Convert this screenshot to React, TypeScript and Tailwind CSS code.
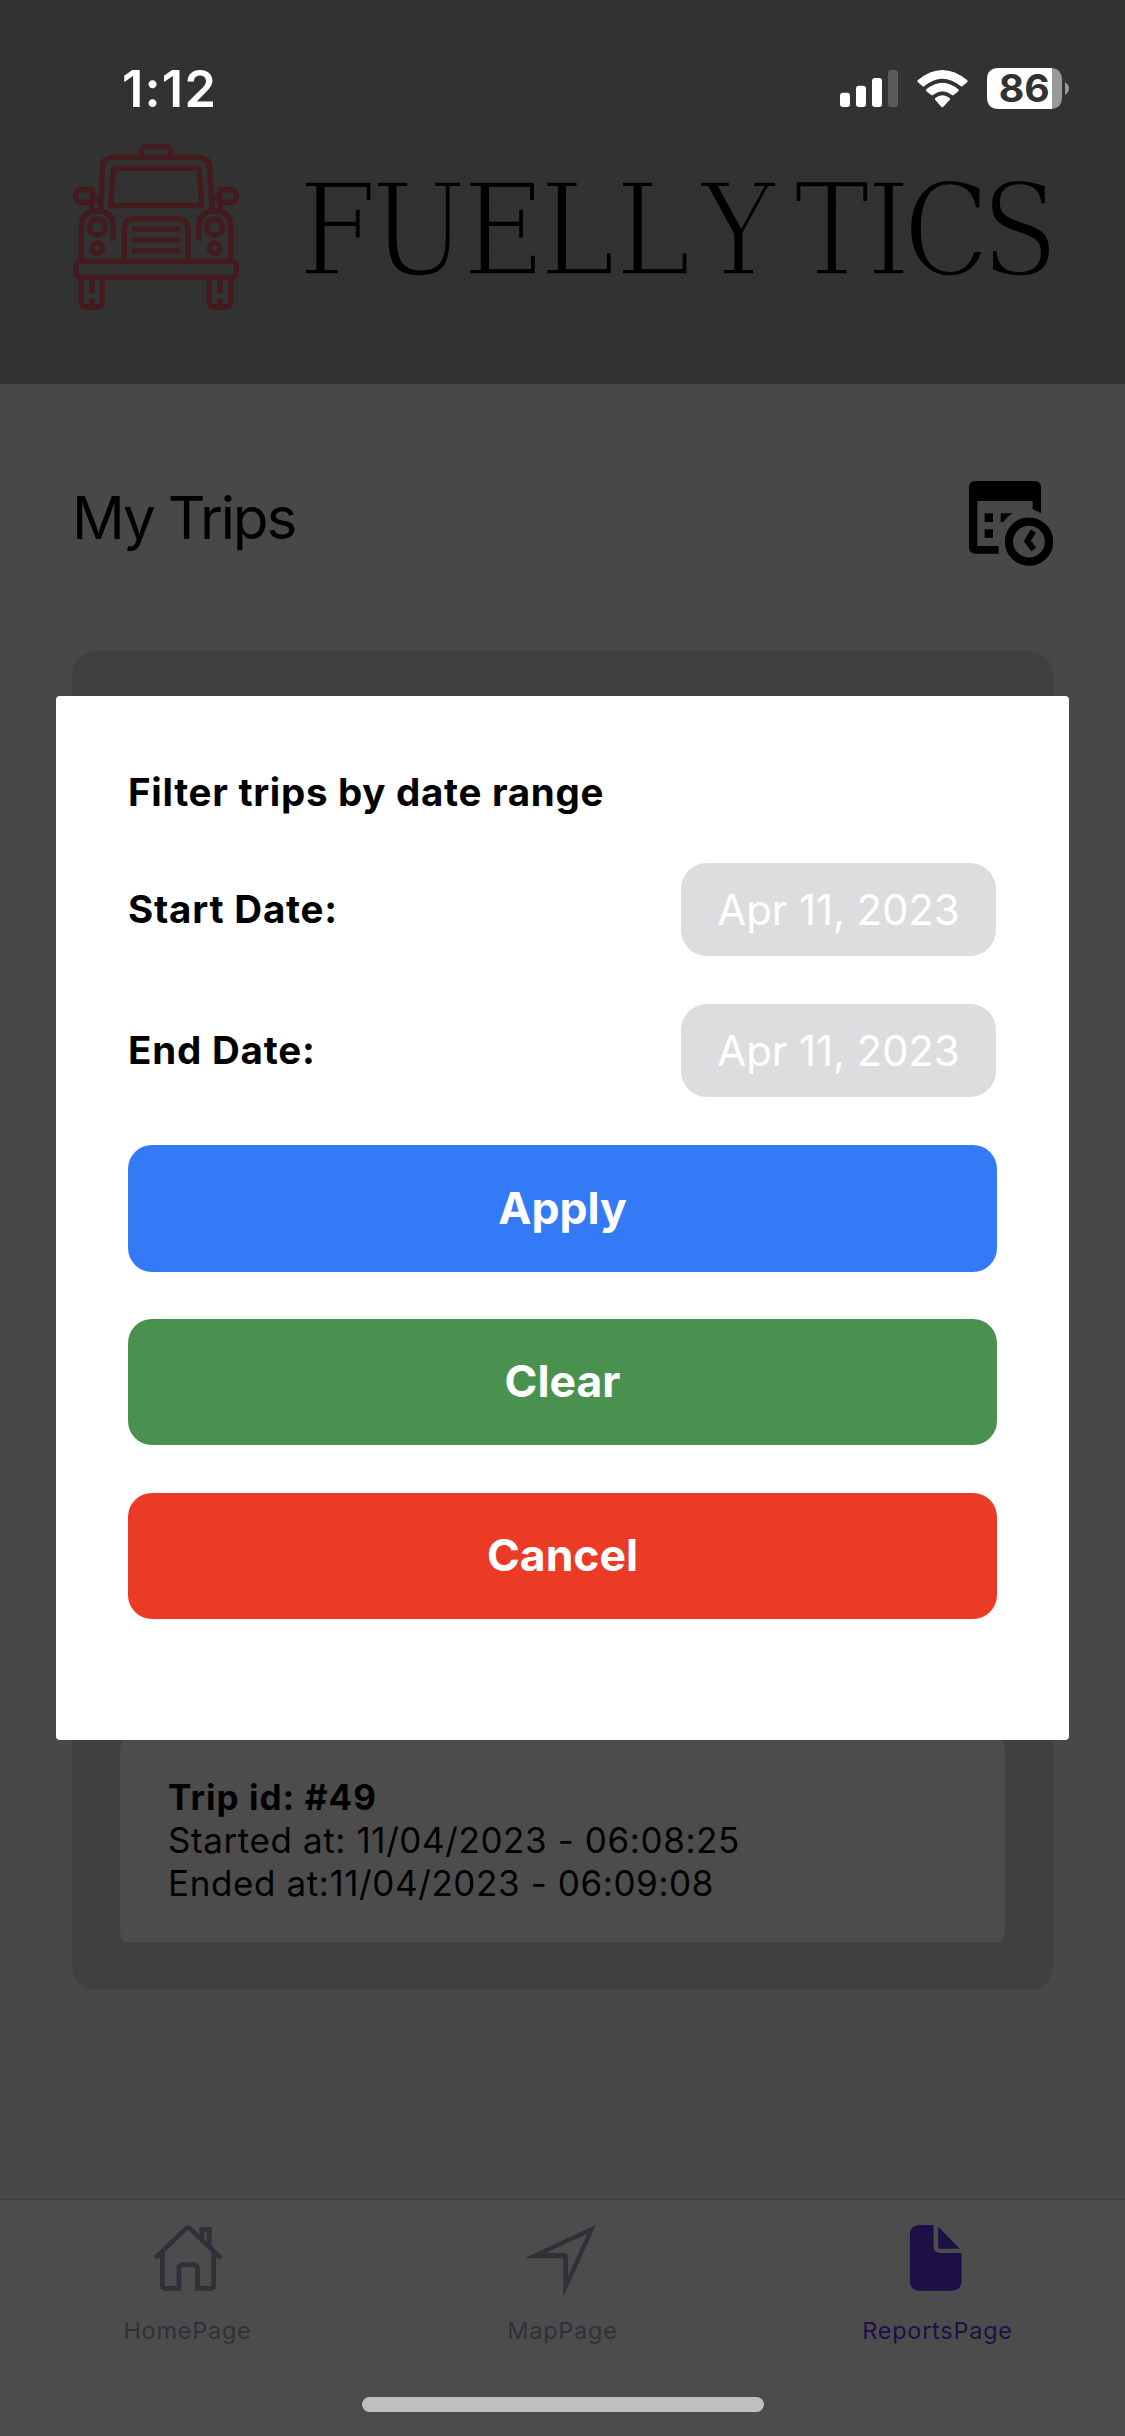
import React from "react";

function StatusIcons() {
  return (
    <svg className="h-[80px] w-[270px]" viewBox="0 0 810 240">
      <g fill="#fff">
        <rect x="60" y="128" width="30" height="43" rx="9" />
        <rect x="108" y="107" width="30" height="64" rx="9" />
        <rect x="156" y="84" width="30" height="87" rx="9" />
        <rect x="204" y="60" width="30" height="111" rx="9" fill="#5b5b5b" />
        <path d="M293 91Q367 29 442 91Q444 94 442 96L427 109Q425 110 423 109Q367 63 312 109Q310 110 308 109L293 96Q291 94 293 91Z" />
        <path d="M319 118Q367 78 415 118Q418 121 415 124L401 135Q399 137 396 135Q367 113 339 135Q336 137 334 135L319 124Q316 121 319 118Z" />
        <path d="M346 144Q367 127 389 144Q392 147 389 150L370 170Q367 173 364 170L346 150Q343 147 346 144Z" />
        <path d="M536 54H696V177H536Q501 177 501 142V89Q501 54 536 54Z" />
        <path d="M696 54Q726 57 726 89V142Q726 174 696 177Z" fill="#999" />
        <path d="M735 97Q747 104 747 115.500Q747 127 735 134Z" fill="#999" />
      </g>
      <text x="536" y="157" fontFamily="Inter, sans-serif" fontWeight="700" fontSize="114" fill="#323232" textLength="153" lengthAdjust="spacingAndGlyphs">86</text>
    </svg>
  );
}

function CarLogo() {
  return (
    <svg className="h-[200px] w-[220px]" viewBox="0 0 660 600" fill="none" stroke="#431a1d" strokeWidth="16">
      <path d="M274 75V65Q277 50 289 50H347Q359 50 362 65V75" />
      <path d="M152 240L157 112Q159 82 190 82H446Q477 82 479 112L486 240" />
      <path d="M182 227L189 125Q190 115 200 115H438Q447 115 448 125L455 227Z" />
      <path d="M126 240V179H97Q77 179 77 198Q77 217 97 217H126M126 200Q144 204 150 216" />
      <path d="M510 240V179H539Q559 179 559 198Q559 217 539 217H510M510 200Q492 204 486 216" />
      <path d="M94 390V292Q94 243 142 243Q190 243 190 292V331" />
      <path d="M542 390V292Q542 243 494 243Q446 243 446 292V331" />
      <circle cx="142" cy="291" r="24" />
      <circle cx="494" cy="291" r="24" />
      <circle cx="142" cy="355" r="16" />
      <circle cx="494" cy="355" r="16" />
      <path d="M223 390V299Q223 266 256 266H381Q414 266 414 299V390M246 298H391M246 330H391M246 362H391" />
      <rect x="78" y="394" width="481" height="48" rx="12" />
      <path d="M94 442V515Q94 531 110 531H141Q157 531 157 515V442M126 450V490M126 506V531" />
      <path d="M478 442V515Q478 531 494 531H526Q542 531 542 515V442M510 450V490M510 506V531" />
    </svg>
  );
}

function Wordmark() {
  return (
    <svg className="h-[130px] w-[790px] overflow-visible" viewBox="0 0 790 130">
      <text
        transform="scale(.88 1)"
        y="110"
        x="42.600 135 231.800 315 401 498 604.500 669 735 818"
        textAnchor="middle"
        fontFamily="'DejaVu Serif', serif"
        fontSize="129"
        fill="#000"
        stroke="#323232"
        strokeWidth="3.500"
      >FUELLYTICS</text>
    </svg>
  );
}

function CalendarClock() {
  return (
    <svg className="h-[86px] w-[84px]" viewBox="87 62 252 258">
      <path fillRule="evenodd" d="M107 62H283Q303 62 303 82V158L278 147V122H112V257H176V280H107Q87 280 87 260V82Q87 62 107 62Z" />
      <path d="M134 159H159V185H134ZM134 207H159V232H134ZM182 159H218Q202 168 190 185H182Z" />
      <circle cx="267" cy="244" r="60" fill="none" stroke="#000" strokeWidth="25" />
      <path d="M280 212L262 242L281 267" fill="none" stroke="#000" strokeWidth="18" />
    </svg>
  );
}

function HomeIcon() {
  return (
    <svg className="size-[78px]" viewBox="143.500 117 230.700 234" preserveAspectRatio="none" fill="none" stroke="currentColor" strokeWidth="14">
      <path d="M162 234L253 146Q259 140 265 146L356 234" />
      <path d="M300 180V148H322V202" />
      <path d="M183 212V317Q183 325 191 325H232V266Q232 254 244 254H275Q287 254 287 266V325H327Q335 325 335 317V212" />
    </svg>
  );
}

function NavigateIcon() {
  return (
    <svg className="size-[78px]" viewBox="1252.700 117 230.700 234" preserveAspectRatio="none" fill="currentColor">
      <path fillRule="evenodd" d="M1466 134L1369 350V239Q1369 234 1364 234H1255ZM1440 161L1317 219H1370Q1383 219 1383 232V288Z" />
    </svg>
  );
}

function DocumentIcon() {
  return (
    <svg className="size-[78px]" viewBox="295.500 117 234 234" fill="currentColor">
      <path d="M358 135H399V198Q399 219 420 219H483V302Q483 332 453 332H358Q328 332 328 302V165Q328 135 358 135Z" />
      <path d="M413 140L478 206H419Q413 206 413 200Z" />
    </svg>
  );
}

function DateRow({ label, value }: { label: string; value: string }) {
  return (
    <div className="flex h-[93px] items-center justify-between pr-px">
      <span className="text-[38.500px] font-bold tracking-[0.800px]">{label}</span>
      <div className="flex h-[93px] w-[315px] items-center justify-center rounded-[26px] bg-[#dddde0] text-[42px] tracking-[-0.150px] text-white">
        {value}
      </div>
    </div>
  );
}

function Tab({ icon, label, color }: { icon: React.ReactNode; label: string; color: string }) {
  return (
    <div className={"flex flex-1 flex-col items-center " + color}>
      {icon}
      <span className="mt-[17px] text-[23.500px] leading-[34px] tracking-[0.750px]">{label}</span>
    </div>
  );
}

export default function App() {
  return (
    <div className="relative flex h-[2436px] w-[1125px] flex-col overflow-hidden bg-[#484848] font-['Inter',sans-serif] text-black">
      <header className="h-[384px] shrink-0 bg-[#323232]">
        <div className="flex h-[130px] items-start justify-between pr-[35px] pl-[122px] pt-[50px]">
          <span className="mt-[9px] text-[50.500px] leading-[60px] font-semibold tracking-[1.200px] text-white">1:12</span>
          <StatusIcons />
        </div>
        <div className="flex pl-[50px]">
          <CarLogo />
          <div className="ml-[30px] mt-[35px]">
            <Wordmark />
          </div>
        </div>
      </header>

      <main className="flex-1 px-[72px]">
        <div className="flex h-[267px] items-start justify-between pt-[97px]">
          <h1 className="mt-[1px] text-[58.500px] leading-[72px] tracking-[-2.200px]">My Trips</h1>
          <CalendarClock />
        </div>
        <section className="h-[1339px] rounded-[24px] bg-[#404040] p-12">
          <div className="h-full overflow-hidden">
            <article className="mt-[1029px] h-[225px] rounded-[24px] bg-[#4c4c4c] p-12 text-[35px] leading-[43px] tracking-[0.600px]">
              <p className="font-bold tracking-[1.050px]">Trip id: #49</p>
              <p>Started at: 11/04/2023 - 06:08:25</p>
              <p>Ended at:11/04/2023 - 06:09:08</p>
            </article>
          </div>
        </section>
      </main>

      <nav className="flex h-[237px] shrink-0 border-t-[1px] border-[#3e3e3e] bg-[#4c4c4c] pt-[19px]">
        <Tab icon={<HomeIcon />} label="HomePage" color="text-[#2f3139]" />
        <Tab icon={<NavigateIcon />} label="MapPage" color="text-[#2f3139]" />
        <Tab icon={<DocumentIcon />} label="ReportsPage" color="text-[#1d0f47]" />
      </nav>
      <div className="absolute bottom-[24px] left-[362px] h-[15px] w-[402px] rounded-full bg-[#bfbfbf]" />

      <div className="absolute top-[696px] left-[56px] flex h-[1044px] w-[1013px] flex-col gap-12 rounded-[4px] bg-white px-[72px] pt-[72px]">
        <h2 className="-mb-[1px] h-[48px] text-[38.500px] leading-[48px] font-bold tracking-[0.700px]">Filter trips by date range</h2>
        <div className="flex flex-col gap-12">
          <DateRow label="Start Date:" value="Apr 11, 2023" />
          <DateRow label="End Date:" value="Apr 11, 2023" />
        </div>
        <button className="h-[127px] shrink-0 rounded-[24px] bg-[#347af6] pb-[1px] text-[44.500px] font-bold text-white">Apply</button>
        <button className="-mt-px h-[126px] shrink-0 rounded-[24px] bg-[#4a9150] pb-[1px] text-[44.500px] font-bold text-white">Clear</button>
        <button className="h-[126px] shrink-0 rounded-[24px] bg-[#eb3b26] pb-[1px] text-[44.500px] font-bold text-white">Cancel</button>
      </div>
    </div>
  );
}
